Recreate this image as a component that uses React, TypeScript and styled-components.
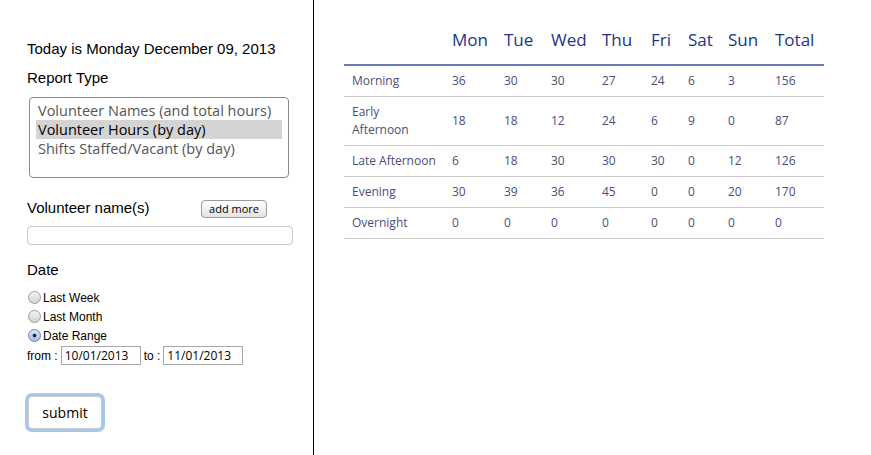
import React, { useState } from "react";
import styled, { createGlobalStyle } from "styled-components";

const GlobalStyle = createGlobalStyle`
  html, body { margin: 0; padding: 0; background: #fff; }
  body { font-family: "Liberation Sans", Arial, sans-serif; }
`;

const Page = styled.div`
  display: flex;
  width: 871px;
  height: 455px;
  overflow: hidden;
`;

const Sidebar = styled.div`
  flex: none;
  border-right: 1px solid #000;
  box-sizing: border-box;
  width: 314px;
  padding: 40px 0 0 27px;
  display: flex;
  flex-direction: column;
  align-items: flex-start;
`;

const Heading = styled.div<{ $mt?: number }>`
  font-size: 15px;
  line-height: 17px;
  color: #000;
  margin-top: ${(p) => p.$mt ?? 0}px;
`;

const ListBox = styled.div`
  margin: 11px 0 0 2px;
  width: 260px;
  height: 81px;
  box-sizing: border-box;
  border: 1px solid #8a8a8a;
  border-radius: 4px;
  padding: 3px 6px;
  font-family: "Open Sans", sans-serif;
  font-size: 14.5px;
`;

const Option = styled.div<{ $selected?: boolean }>`
  height: 19px;
  line-height: 19px;
  padding-left: 2px;
  color: ${(p) => (p.$selected ? "#000" : "#555")};
  background: ${(p) => (p.$selected ? "#d4d4d4" : "transparent")};
  white-space: nowrap;
`;

const NameRow = styled.div`
  display: flex;
  align-items: flex-start;
  width: 266px;
  margin-top: 21px;
`;

const SmallButton = styled.button`
  margin-left: auto;
  margin-right: 26px;
  margin-top: 1px;
  height: 18px;
  padding: 0 7px;
  font-family: "Open Sans", sans-serif;
  font-size: 11px;
  line-height: 14px;
  color: #000;
  border: 1px solid #9a9a9a;
  border-radius: 4px;
  background: linear-gradient(#ffffff, #e4e4e4);
`;

const TextInput = styled.input`
  margin-top: 8px;
  width: 266px;
  height: 19px;
  box-sizing: border-box;
  border: 1px solid #c8c8c8;
  border-radius: 4px;
  padding: 0 4px;
  outline: none;
`;

const RadioList = styled.div`
  display: flex;
  flex-direction: column;
  margin-top: 10px;
`;

const RadioRow = styled.label`
  display: flex;
  align-items: center;
  height: 19px;
  font-size: 12px;
  color: #000;
  padding-left: 1px;
`;

const RadioDot = styled.span<{ $checked?: boolean }>`
  width: 13px;
  height: 13px;
  box-sizing: border-box;
  border-radius: 50%;
  border: 1px solid ${(p) => (p.$checked ? "#6d87b0" : "#9b9b9b")};
  background: ${(p) =>
    p.$checked
      ? "radial-gradient(circle at 50% 50%, #1c2a44 0 1.6px, transparent 2.2px), linear-gradient(#d6e4f6, #9fc0e8)"
      : "linear-gradient(#f4f4f4, #d2d2d2)"};
  margin-right: 2px;
  flex: none;
`;

const RangeRow = styled.div`
  display: flex;
  align-items: center;
  margin-top: 1px;
  font-size: 12px;
  color: #000;
`;

const DateInput = styled.input`
  width: 80px;
  height: 19px;
  box-sizing: border-box;
  border: 1px solid #a8a8a8;
  padding: 0 3px;
  margin: 0 3px 0 3px;
  font-family: "Open Sans", sans-serif;
  font-size: 12px;
  color: #000;
  outline: none;
`;

const SubmitButton = styled.button`
  margin-top: 31px;
  margin-left: 1px;
  width: 74px;
  height: 33px;
  box-sizing: border-box;
  background: #fff;
  border: 1px solid #c9c9c9;
  border-radius: 4px;
  box-shadow: 0 0 0 3px #a5c7ec;
  font-family: "Open Sans", sans-serif;
  font-size: 14px;
  color: #000;
`;

const Main = styled.div`
  padding: 28px 0 0 30px;
`;

const Table = styled.table`
  width: 480px;
  table-layout: fixed;
  border-collapse: collapse;
  font-family: "Open Sans", sans-serif;
`;

const Th = styled.th`
  text-align: left;
  font-weight: 500;
  font-size: 17px;
  line-height: 24px;
  color: #1a358c;
  padding: 0 0 12px 8px;
  border-bottom: 2px solid #6b7db6;
  white-space: nowrap;
`;

const Td = styled.td`
  font-size: 12px;
  line-height: 18px;
  color: #4a4d7d;
  padding: 6px 0 6px 8px;
  border-bottom: 1px solid #cccccc;
  white-space: pre-line;
  vertical-align: middle;
`;

const widths = [100, 52, 47, 51, 49, 37, 40, 47, 57];
const days = ["Mon", "Tue", "Wed", "Thu", "Fri", "Sat", "Sun", "Total"];
const rows: [string, number[]][] = [
  ["Morning", [36, 30, 30, 27, 24, 6, 3, 156]],
  ["Early\nAfternoon", [18, 18, 12, 24, 6, 9, 0, 87]],
  ["Late Afternoon", [6, 18, 30, 30, 30, 0, 12, 126]],
  ["Evening", [30, 39, 36, 45, 0, 0, 20, 170]],
  ["Overnight", [0, 0, 0, 0, 0, 0, 0, 0]],
];

const reportTypes = [
  "Volunteer Names (and total hours)",
  "Volunteer Hours (by day)",
  "Shifts Staffed/Vacant (by day)",
];

const ranges = ["Last Week", "Last Month", "Date Range"];

export default function App() {
  const [report, setReport] = useState(1);
  const [range, setRange] = useState(2);
  return (
    <>
      <GlobalStyle />
      <Page>
        <Sidebar>
          <Heading>Today is Monday December 09, 2013</Heading>
          <Heading $mt={12}>Report Type</Heading>
          <ListBox role="listbox">
            {reportTypes.map((t, i) => (
              <Option key={t} $selected={i === report} onClick={() => setReport(i)}>
                {t}
              </Option>
            ))}
          </ListBox>
          <NameRow>
            <Heading>Volunteer name(s)</Heading>
            <SmallButton>add more</SmallButton>
          </NameRow>
          <TextInput type="text" />
          <Heading $mt={16}>Date</Heading>
          <RadioList>
            {ranges.map((r, i) => (
              <RadioRow key={r} onClick={() => setRange(i)}>
                <RadioDot $checked={i === range} />
                {r}
              </RadioRow>
            ))}
          </RadioList>
          <RangeRow>
            from :<DateInput defaultValue="10/01/2013" />
            to :<DateInput defaultValue="11/01/2013" />
          </RangeRow>
          <SubmitButton>submit</SubmitButton>
        </Sidebar>
        <Main>
          <Table>
            <colgroup>
              {widths.map((w, i) => (
                <col key={i} style={{ width: w }} />
              ))}
            </colgroup>
            <thead>
              <tr>
                <Th />
                {days.map((d) => (
                  <Th key={d}>{d}</Th>
                ))}
              </tr>
            </thead>
            <tbody>
              {rows.map(([label, vals]) => (
                <tr key={label}>
                  <Td>{label}</Td>
                  {vals.map((v, i) => (
                    <Td key={i}>{v}</Td>
                  ))}
                </tr>
              ))}
            </tbody>
          </Table>
        </Main>
      </Page>
    </>
  );
}
